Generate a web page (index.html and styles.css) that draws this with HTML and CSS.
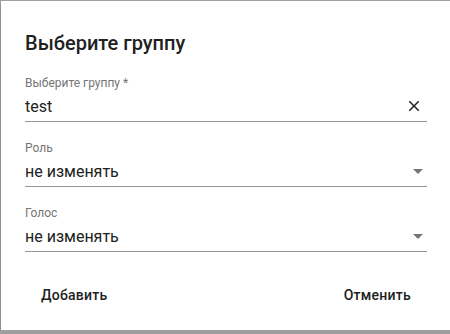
FILE: index.html
```html
<!DOCTYPE html>
<html>
<head>
<meta charset="UTF-8">
<title>Выберите группу</title>
<link rel="stylesheet" href="styles.css">
</head>
<body>

<div class="dialog">
  <h2 class="dialog-title">Выберите группу</h2>

  <div class="field">
    <label class="field-label">Выберите группу *</label>
    <div class="field-row">
      <span class="field-value">test</span>
      <svg class="icon-clear" width="18" height="18" viewBox="0 0 24 24"><path d="M19 6.41L17.59 5 12 10.59 6.41 5 5 6.41 10.59 12 5 17.59 6.41 19 12 13.41 17.59 19 19 17.59 13.41 12z"/></svg>
    </div>
  </div>

  <div class="field">
    <label class="field-label">Роль</label>
    <div class="field-row">
      <span class="field-value">не изменять</span>
      <span class="arrow"></span>
    </div>
  </div>

  <div class="field">
    <label class="field-label">Голос</label>
    <div class="field-row">
      <span class="field-value">не изменять</span>
      <span class="arrow"></span>
    </div>
  </div>

  <div class="actions">
    <button class="btn">Добавить</button>
    <button class="btn">Отменить</button>
  </div>
</div>

</body>
</html>
```

FILE: styles.css
```css
body {
  margin: 0;
  background-color: #9e9e9e;
  font-family: Roboto, "Noto Sans", sans-serif;
  overflow: hidden;
}
.dialog {
  margin: 1px 0 0 1px;
  width: 402px;
  height: 303px;
  padding: 26px 24px 0 24px;
  background-color: #fff;
  box-shadow: 0 3px 3px rgba(0, 0, 0, 0.25);
}
.dialog-title {
  margin: 0 0 16px 0;
  font-size: 20px;
  font-weight: 500;
  line-height: 32px;
  color: #212121;
}
.field {
  display: flex;
  flex-direction: column;
  margin-bottom: 18px;
}
.field-label {
  font-size: 12px;
  line-height: 16px;
  color: #757575;
}
.field-row {
  display: flex;
  align-items: center;
  justify-content: space-between;
  height: 30px;
  border-bottom: 1px solid #949494;
}
.field-value {
  font-size: 16px;
  color: #212121;
}
.icon-clear {
  fill: #212121;
  margin-right: 4px;
}
.arrow {
  width: 0;
  height: 0;
  margin-right: 4px;
  border-left: 5px solid transparent;
  border-right: 5px solid transparent;
  border-top: 5px solid #757575;
}
.actions {
  display: flex;
  justify-content: space-between;
  margin-top: 25px;
}
.btn {
  height: 36px;
  padding: 0 16px;
  border: none;
  background: none;
  font-family: Roboto, "Noto Sans", sans-serif;
  font-size: 14px;
  font-weight: 500;
  letter-spacing: 0.25px;
  color: #212121;
  cursor: pointer;
}
```
